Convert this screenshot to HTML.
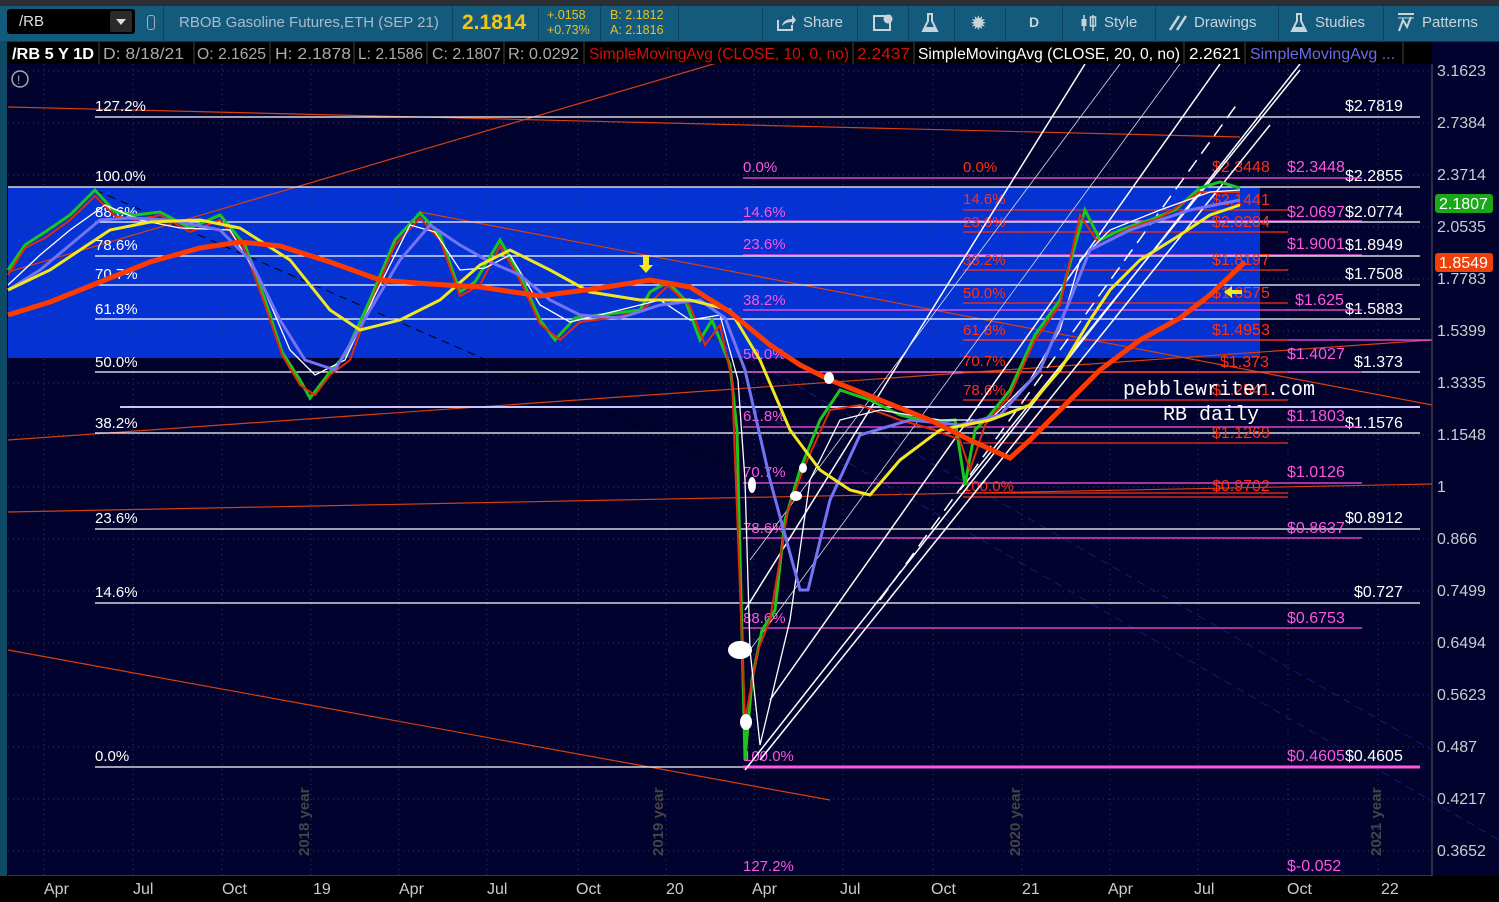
<!DOCTYPE html>
<html><head><meta charset="utf-8"><style>
html,body{margin:0;padding:0;background:#02022e;width:1499px;height:902px;overflow:hidden}
body{font-family:"Liberation Sans Narrow","Liberation Sans",sans-serif;position:relative}
.top{position:absolute;left:0;top:0;width:1499px;height:6px;background:#2b2f33}
.tb{position:absolute;left:0;top:6px;width:1499px;height:35px;background:#145a7c;border-bottom:1px solid #0c3a52}
.sym{position:absolute;left:7px;top:3px;width:128px;height:25px;background:#000;border-radius:3px;color:#ddd;font-size:15px;line-height:25px;padding-left:12px;box-sizing:border-box}
.sym .dd{position:absolute;right:3px;top:2px;width:22px;height:21px;background:#2a2a2a;border-radius:2px}
.sym .dd:after{content:"";position:absolute;left:6px;top:8px;border-left:5px solid transparent;border-right:5px solid transparent;border-top:6px solid #ddd}
.t{position:absolute;color:#a9bcc8;font-size:15px;top:8px}
.sep{position:absolute;top:0;width:1px;height:35px;background:#0e4461}
</style></head><body>
<div class="top"></div>
<div class="tb">
 <div class="sym">/RB<div class="dd"></div></div>
 <div style="position:absolute;left:147px;top:9px;width:6px;height:13px;border:1.5px solid #aab;border-radius:3px"></div>
 <div class="sep" style="left:163px"></div>
 <div class="t" style="left:179px">RBOB Gasoline Futures,ETH (SEP 21)</div>
 <div class="sep" style="left:452px"></div>
 <div class="t" style="left:462px;top:5px;color:#f3c614;font-size:21px;font-weight:bold">2.1814</div>
 <div class="sep" style="left:538px"></div>
 <div class="t" style="left:547px;top:2px;color:#e8c020;font-size:12.5px;line-height:15px">+.0158<br>+0.73%</div>
 <div class="sep" style="left:600px"></div>
 <div class="t" style="left:610px;top:2px;color:#e8c020;font-size:12.5px;line-height:15px">B: 2.1812<br>A: 2.1816</div>
 <div class="sep" style="left:678px"></div>
 <div class="sep" style="left:762px"></div>
 <svg style="position:absolute;left:776px;top:8px" width="20" height="18"><path d="M2 6v10h14v-5" stroke="#c8d4dc" stroke-width="2" fill="none"/><path d="M6 12c1-5 5-7 10-7V1l4 5-4 5V8c-4 0-7 1-10 4z" fill="#c8d4dc"/></svg>
 <div class="t" style="left:803px;color:#c8d4dc">Share</div>
 <div class="sep" style="left:857px"></div>
 <svg style="position:absolute;left:872px;top:8px" width="22" height="18"><rect x="2" y="2" width="16" height="14" stroke="#c8d4dc" stroke-width="2" fill="none"/><circle cx="16" cy="5" r="4.5" fill="#c8d4dc"/></svg>
 <div class="sep" style="left:908px"></div>
 <svg style="position:absolute;left:921px;top:6px" width="18" height="22"><path d="M6 2h6M7 2v7L2 19h14L11 9V2" stroke="#c8d4dc" stroke-width="2" fill="none"/><path d="M4 15h10l2 4H2z" fill="#c8d4dc"/></svg>
 <div class="sep" style="left:954px"></div>
 <div class="t" style="left:970px;top:5px;color:#c8d4dc;font-size:20px">✹</div>
 <div class="sep" style="left:1005px"></div>
 <div class="t" style="left:1029px;color:#c8d4dc;font-weight:bold;font-size:14px">D</div>
 <div class="sep" style="left:1062px"></div>
 <svg style="position:absolute;left:1079px;top:7px" width="20" height="20"><path d="M5 2v16M14 2v16" stroke="#c8d4dc" stroke-width="1.5"/><rect x="2.5" y="6" width="5" height="7" fill="#c8d4dc"/><rect x="11.5" y="4" width="5" height="9" fill="none" stroke="#c8d4dc" stroke-width="1.5"/></svg>
 <div class="t" style="left:1104px;color:#c8d4dc">Style</div>
 <div class="sep" style="left:1155px"></div>
 <svg style="position:absolute;left:1168px;top:8px" width="20" height="18"><path d="M2 16L11 2M9 16L18 2" stroke="#c8d4dc" stroke-width="2.5"/></svg>
 <div class="t" style="left:1194px;color:#c8d4dc">Drawings</div>
 <div class="sep" style="left:1278px"></div>
 <svg style="position:absolute;left:1290px;top:6px" width="18" height="22"><path d="M6 2h6M7 2v7L2 19h14L11 9V2" stroke="#c8d4dc" stroke-width="2" fill="none"/><path d="M4 15h10l2 4H2z" fill="#c8d4dc"/></svg>
 <div class="t" style="left:1315px;color:#c8d4dc">Studies</div>
 <div class="sep" style="left:1383px"></div>
 <svg style="position:absolute;left:1396px;top:6px" width="20" height="22"><path d="M2 2h16M3 19L7 8l4 7 4-10" stroke="#c8d4dc" stroke-width="2" fill="none"/><path d="M2 6h16" stroke="#c8d4dc" stroke-width="1"/></svg>
 <div class="t" style="left:1422px;color:#c8d4dc">Patterns</div>
</div>
<div style="position:absolute;left:0;top:41px;width:7px;height:861px;background:#0f4a66"></div>
<svg style="position:absolute;left:0;top:42px" width="1499" height="22" font-family="Liberation Sans, sans-serif" font-size="16">
<rect x="8" y="0" width="1424" height="22" fill="#000"/>
<g stroke="#444"><path d="M99 0V22M194 0V22M270 0V22M354 0V22M427 0V22M504 0V22M584 0V22M853 0V22M914 0V22M1184 0V22M1245 0V22M1403 0V22"/></g>
<g fill="#aaa">
<text x="12" y="17" fill="#fff" font-weight="bold" textLength="82" lengthAdjust="spacingAndGlyphs">/RB 5 Y 1D</text>
<text x="103" y="17" textLength="81" lengthAdjust="spacingAndGlyphs">D: 8/18/21</text>
<text x="197" y="17" textLength="69" lengthAdjust="spacingAndGlyphs">O: 2.1625</text>
<text x="275" y="17" textLength="76" lengthAdjust="spacingAndGlyphs">H: 2.1878</text>
<text x="358" y="17" textLength="65" lengthAdjust="spacingAndGlyphs">L: 2.1586</text>
<text x="432" y="17" textLength="69" lengthAdjust="spacingAndGlyphs">C: 2.1807</text>
<text x="508" y="17" textLength="71" lengthAdjust="spacingAndGlyphs">R: 0.0292</text>
<text x="589" y="17" fill="#d01010" textLength="260" lengthAdjust="spacingAndGlyphs">SimpleMovingAvg (CLOSE, 10, 0, no)</text>
<text x="857" y="17" fill="#d01010" textLength="53" lengthAdjust="spacingAndGlyphs">2.2437</text>
<text x="918" y="17" fill="#fff" textLength="262" lengthAdjust="spacingAndGlyphs">SimpleMovingAvg (CLOSE, 20, 0, no)</text>
<text x="1189" y="17" fill="#fff" textLength="52" lengthAdjust="spacingAndGlyphs">2.2621</text>
<text x="1250" y="17" fill="#6a6af0" textLength="145" lengthAdjust="spacingAndGlyphs">SimpleMovingAvg ...</text>
</g></svg>
<svg style="position:absolute;left:0;top:64px" width="1499" height="838" viewBox="0 64 1499 838" font-family="Liberation Sans Narrow, Liberation Sans, sans-serif" font-size="15">
<rect x="8" y="64" width="1424" height="812" fill="#02022e"/>
<rect x="8" y="187" width="1252" height="171" fill="#0532d2"/>
<g stroke="#3a3a5a" stroke-dasharray="1,4">
<path d="M8 71H1432M8 123H1432M8 175H1432M8 227H1432M8 279H1432M8 331H1432M8 383H1432M8 435H1432M8 487H1432M8 539H1432M8 591H1432M8 643H1432M8 695H1432M8 747H1432M8 799H1432M8 851H1432"/>
<path d="M44 64V876M133 64V876M222 64V876M311 64V876M399 64V876M487 64V876M578 64V876M666 64V876M754 64V876M843 64V876M933 64V876M1022 64V876M1110 64V876M1198 64V876M1288 64V876M1378 64V876"/>
</g>
<g fill="#444" font-size="15" font-weight="bold"><text transform="translate(309,856) rotate(-90)">2018 year</text><text transform="translate(663,856) rotate(-90)">2019 year</text><text transform="translate(1020,856) rotate(-90)">2020 year</text><text transform="translate(1381,856) rotate(-90)">2021 year</text></g>
<circle cx="20" cy="79" r="8" fill="none" stroke="#aaa" stroke-width="1.5"/><text x="17" y="84" fill="#aaa" font-size="12">!</text>
<g stroke="#d8400c" stroke-width="1.2" fill="none">
<path d="M8 107L1240 137"/><path d="M8 272L720 62"/><path d="M8 440L1432 340"/><path d="M8 512L1432 484"/><path d="M8 650L830 800"/><path d="M420 212L1432 405"/>
</g>
<path d="M95 190L740 470" stroke="#000" stroke-dasharray="8,6"/>
<path d="M700 330L1432 750" stroke="#1a1a70" stroke-dasharray="8,6"/>
<path d="M740 400L1499 840" stroke="#1a1a70" stroke-dasharray="8,6"/>
<g stroke="#fff" stroke-width="1.2">
<path d="M95 117H1420M8 187H1420M95 222H1420M95 256H1420M95 285H1420M95 319H1420M95 372H1420M95 433H1420M95 529H1420M95 603H1420M95 767H1420"/></g>
<path d="M120 407H1420" stroke="#c8c8ff" stroke-width="2"/>
<g fill="#fff" font-size="15"><text x="95" y="111">127.2%</text><text x="95" y="181">100.0%</text><text x="95" y="217">88.6%</text><text x="95" y="250">78.6%</text><text x="95" y="279">70.7%</text><text x="95" y="314">61.8%</text><text x="95" y="367">50.0%</text><text x="95" y="428">38.2%</text><text x="95" y="523">23.6%</text><text x="95" y="597">14.6%</text><text x="95" y="761">0.0%</text>
<g font-size="16"><text x="1345" y="111">$2.7819</text><text x="1345" y="181">$2.2855</text><text x="1345" y="217">$2.0774</text><text x="1345" y="250">$1.8949</text><text x="1345" y="279">$1.7508</text><text x="1345" y="314">$1.5883</text><text x="1354" y="367">$1.373</text><text x="1345" y="428">$1.1576</text><text x="1345" y="523">$0.8912</text><text x="1354" y="597">$0.727</text><text x="1345" y="761">$0.4605</text></g></g>
<g stroke="#ff55e0" stroke-width="1.2"><path d="M743 178H1362M743 221H1362M743 255H1362M743 310H1362M743 372H1362M743 427H1362M743 483H1362M743 538H1362M743 628H1362M963 340H1432"/><path d="M743 767H1420" stroke-width="3"/></g>
<g fill="#ff55e0" font-size="15"><text x="743" y="172">0.0%</text><text x="743" y="217">14.6%</text><text x="743" y="249">23.6%</text><text x="743" y="305">38.2%</text><text x="743" y="359">50.0%</text><text x="743" y="421">61.8%</text><text x="743" y="477">70.7%</text><text x="743" y="533">78.6%</text><text x="743" y="623">88.6%</text><text x="743" y="761">100.0%</text><text x="743" y="871">127.2%</text>
<g font-size="16"><text x="1287" y="172">$2.3448</text><text x="1287" y="217">$2.0697</text><text x="1295" y="305">$1.625</text><text x="1287" y="249">$1.9001</text><text x="1287" y="359">$1.4027</text><text x="1287" y="421">$1.1803</text><text x="1287" y="477">$1.0126</text><text x="1287" y="533">$0.8637</text><text x="1287" y="623">$0.6753</text><text x="1287" y="761">$0.4605</text><text x="1287" y="871">$-0.052</text></g></g>
<g stroke="#ff3010" stroke-width="1.2"><path d="M963 210H1288M963 232H1288M963 270H1288M963 303H1288M963 340H1288M963 372H1288M963 400H1288M963 443H1288M963 493H1288M963 497H1288"/></g>
<g fill="#ff3010" font-size="15"><text x="963" y="172">0.0%</text><text x="963" y="204">14.6%</text><text x="963" y="227">23.6%</text><text x="963" y="265">38.2%</text><text x="963" y="298">50.0%</text><text x="963" y="335">61.8%</text><text x="963" y="366">70.7%</text><text x="963" y="395">78.6%</text><text x="963" y="491">100.0%</text>
<g font-size="16"><text x="1212" y="172">$2.3448</text><text x="1212" y="205">$2.1441</text><text x="1212" y="227">$2.0204</text><text x="1212" y="265">$1.8197</text><text x="1212" y="298">$1.6575</text><text x="1212" y="335">$1.4953</text><text x="1220" y="367">$1.373</text><text x="1212" y="395">$1.2541</text><text x="1212" y="438">$1.1269</text><text x="1212" y="491">$0.9702</text></g></g>
<g stroke="#fff" stroke-width="1.5" fill="none">
<path d="M745 770L1300 64"/><path d="M770 700L1220 64"/><path d="M880 600L1240 100" stroke-dasharray="14,8"/><path d="M745 610L1085 64"/><path d="M760 760L1270 125"/><path d="M960 490L1300 70"/>
</g>
<g stroke="#ddd" stroke-width="0.8"><path d="M750 650L1180 64"/><path d="M750 560L1120 64"/></g>
<polyline fill="none" stroke="#1cc41c" stroke-width="3" points="8,270 25,245 45,232 70,215 95,190 115,212 135,215 160,212 190,228 220,215 245,245 265,300 282,352 300,380 310,398 330,372 345,355 370,300 395,240 420,213 440,235 460,292 475,282 500,240 520,275 540,320 555,340 575,318 600,315 640,310 650,292 668,282 685,300 700,340 712,320 730,365 737,430 745,760 752,680 762,630 775,610 785,520 800,470 820,420 840,390 870,400 900,415 930,422 955,420 965,485 975,430 990,415 1010,390 1035,335 1060,300 1075,245 1085,210 1100,240 1120,230 1150,220 1175,210 1200,188 1220,182 1240,188"/>
<polyline fill="none" stroke="#e02a0a" stroke-width="2" points="8,275 25,248 45,238 70,220 95,196 115,216 135,220 160,215 190,232 220,220 245,250 265,305 282,355 300,385 315,395 330,375 350,360 370,305 395,245 420,218 440,240 460,296 480,285 500,246 520,280 540,324 560,340 580,322 610,318 640,312 668,286 690,306 705,345 720,325 732,380 745,720 758,650 770,620 788,510 805,465 830,410 860,405 900,420 935,430 960,440 970,470 985,425 1010,395 1035,340 1060,305 1080,215 1100,245 1130,228 1160,218 1200,192 1240,192"/>
<polyline fill="none" stroke="#fff" stroke-width="1.3" points="8,285 40,255 70,230 105,205 140,220 180,228 230,230 260,280 290,350 315,375 345,360 375,295 410,225 435,232 460,270 485,268 510,255 540,305 570,322 620,310 660,300 690,320 720,315 738,380 745,480 750,650 760,745 790,620 810,480 840,420 880,410 940,420 990,420 1030,380 1060,330 1080,260 1110,230 1160,210 1210,192 1240,190"/>
<polyline fill="none" stroke="#7373f5" stroke-width="3" points="8,290 40,270 70,245 100,220 130,218 170,220 220,230 250,260 280,320 305,360 335,370 370,310 400,260 430,225 460,245 490,262 520,275 550,300 580,315 620,318 660,305 700,300 725,318 745,370 770,480 800,590 808,590 830,500 860,435 910,420 960,425 1000,415 1040,370 1070,300 1090,250 1130,230 1190,210 1240,200"/>
<polyline fill="none" stroke="#f2e820" stroke-width="3" points="8,290 50,270 80,250 110,230 150,222 200,220 240,228 290,260 330,310 360,330 400,320 440,300 480,265 510,250 550,270 590,292 640,300 690,300 730,310 760,360 790,430 820,470 850,490 870,495 900,460 940,430 990,420 1030,405 1060,370 1090,320 1110,290 1140,260 1180,235 1210,215 1240,205"/>
<polyline fill="none" stroke="#ff3a00" stroke-width="5" points="8,315 50,302 100,282 150,262 200,248 240,242 280,246 330,262 380,280 430,284 480,287 540,296 600,288 650,280 690,287 730,312 770,345 800,365 830,380 880,400 930,420 970,440 1010,458 1030,440 1060,410 1100,370 1140,340 1180,318 1210,295 1245,262"/>
<g fill="#fff"><ellipse cx="740" cy="650" rx="12" ry="9"/><ellipse cx="746" cy="722" rx="6" ry="8"/><ellipse cx="752" cy="485" rx="4" ry="8"/><ellipse cx="796" cy="496" rx="6" ry="5"/><ellipse cx="829" cy="378" rx="5" ry="6"/><ellipse cx="803" cy="468" rx="4" ry="5"/></g>
<path d="M643 255v10h-4l7 8 7-8h-4v-10z" fill="#f2e820"/>
<path d="M1242 290h-10v-4l-8 6 8 6v-4h10z" fill="#f2e820"/>
<g fill="#fff" font-family="Liberation Mono, monospace" font-size="20"><text x="1123" y="395">pebblewriter.com</text><text x="1163" y="420">RB daily</text></g>
<path d="M1432 64V876" stroke="#555"/>
<path d="M8 876H1432" stroke="#666"/>
<rect x="0" y="876" width="1499" height="26" fill="#000"/>
<g fill="#ccc" font-size="16"><text x="1437" y="76">3.1623</text><text x="1437" y="128">2.7384</text><text x="1437" y="180">2.3714</text><text x="1437" y="232">2.0535</text><text x="1437" y="284">1.7783</text><text x="1437" y="336">1.5399</text><text x="1437" y="388">1.3335</text><text x="1437" y="440">1.1548</text><text x="1437" y="492">1</text><text x="1437" y="544">0.866</text><text x="1437" y="596">0.7499</text><text x="1437" y="648">0.6494</text><text x="1437" y="700">0.5623</text><text x="1437" y="752">0.487</text><text x="1437" y="804">0.4217</text><text x="1437" y="856">0.3652</text></g>
<rect x="1435" y="194" width="58" height="19" rx="3" fill="#1aa81a"/><text x="1439" y="209" fill="#fff" font-size="16">2.1807</text>
<rect x="1435" y="253" width="58" height="19" rx="3" fill="#f0400a"/><text x="1439" y="268" fill="#fff" font-size="16">1.8549</text>
<g fill="#ccc" font-size="16"><text x="44" y="894">Apr</text><text x="133" y="894">Jul</text><text x="222" y="894">Oct</text><text x="313" y="894">19</text><text x="399" y="894">Apr</text><text x="487" y="894">Jul</text><text x="576" y="894">Oct</text><text x="666" y="894">20</text><text x="752" y="894">Apr</text><text x="840" y="894">Jul</text><text x="931" y="894">Oct</text><text x="1022" y="894">21</text><text x="1108" y="894">Apr</text><text x="1194" y="894">Jul</text><text x="1287" y="894">Oct</text><text x="1381" y="894">22</text></g>
</svg>
</body></html>
